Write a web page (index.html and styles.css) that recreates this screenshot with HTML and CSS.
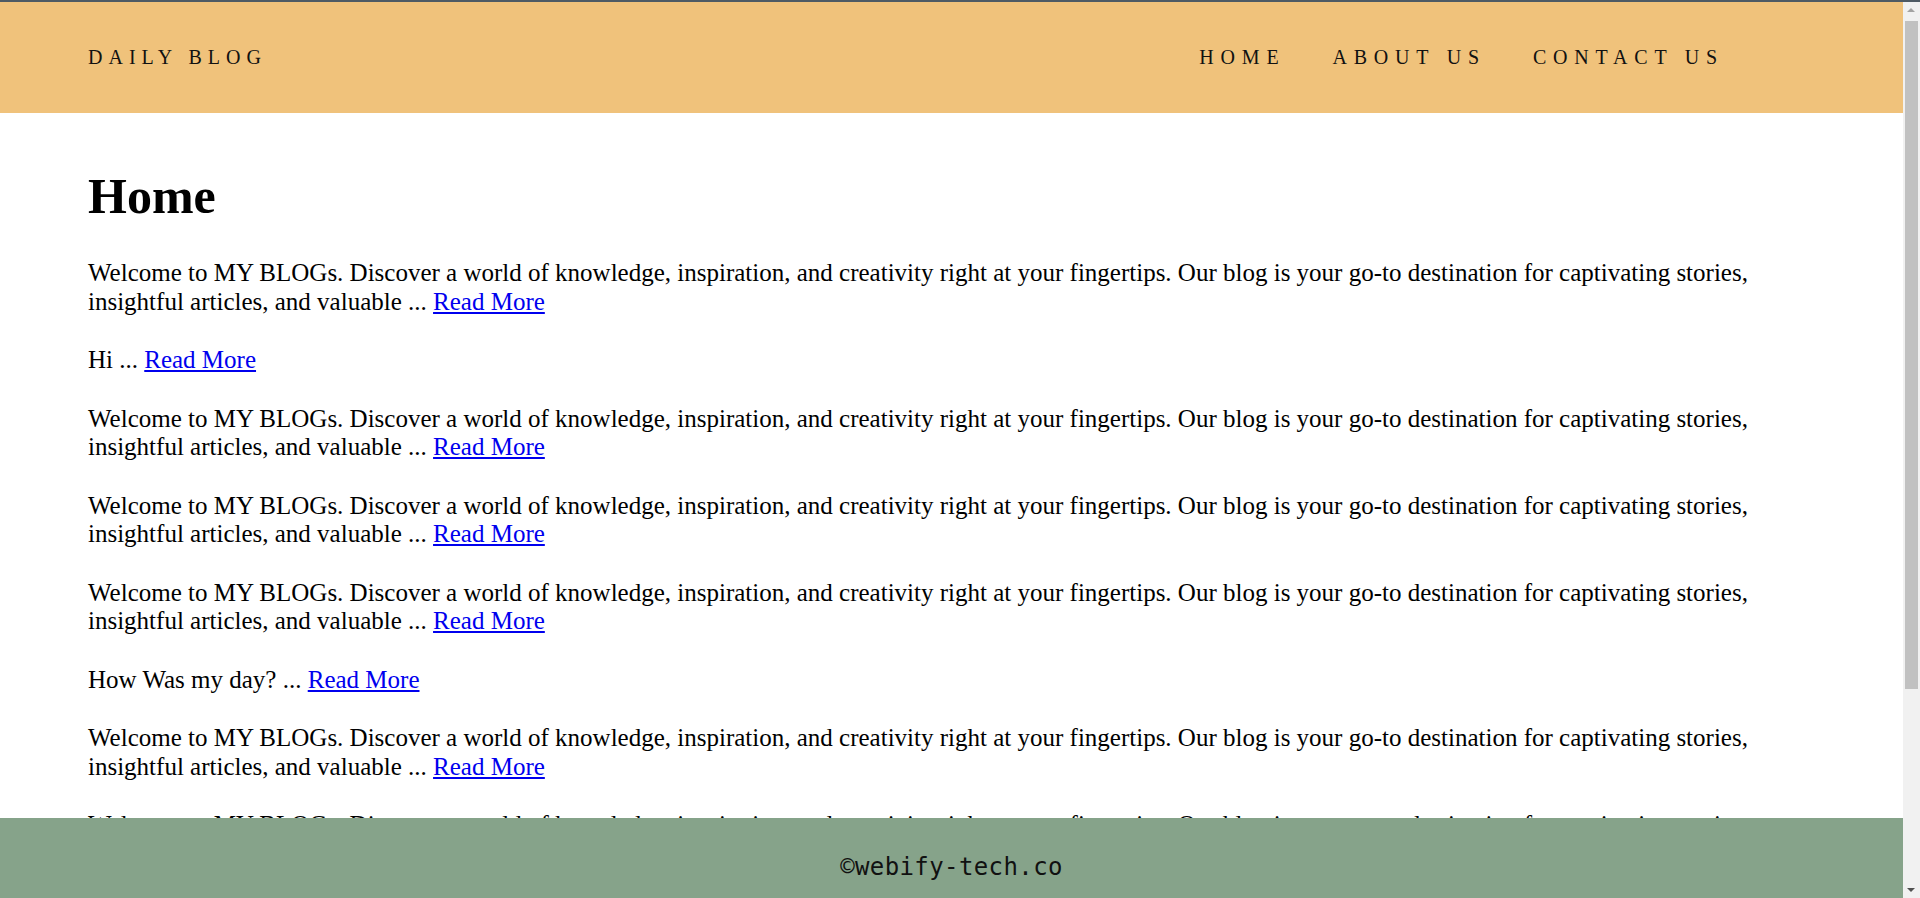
FILE: index.html
```html
<!DOCTYPE html>
<html lang="en">
<head>
<meta charset="utf-8">
<title>Daily Blog</title>
<link rel="stylesheet" href="styles.css">
</head>
<body>
<header class="site-header">
  <div class="logo">DAILY BLOG</div>
  <nav class="nav">
    <a class="nav-link" href="#">HOME</a>
    <a class="nav-link" href="#">ABOUT US</a>
    <a class="nav-link" href="#">CONTACT US</a>
  </nav>
</header>
<main class="content">
  <h1 class="page-title">Home</h1>
  <p class="post">Welcome to MY BLOGs. Discover a world of knowledge, inspiration, and creativity right at your fingertips. Our blog is your go-to destination for captivating stories, insightful articles, and valuable ... <a href="#">Read More</a></p>
  <p class="post">Hi ... <a href="#">Read More</a></p>
  <p class="post">Welcome to MY BLOGs. Discover a world of knowledge, inspiration, and creativity right at your fingertips. Our blog is your go-to destination for captivating stories, insightful articles, and valuable ... <a href="#">Read More</a></p>
  <p class="post">Welcome to MY BLOGs. Discover a world of knowledge, inspiration, and creativity right at your fingertips. Our blog is your go-to destination for captivating stories, insightful articles, and valuable ... <a href="#">Read More</a></p>
  <p class="post">Welcome to MY BLOGs. Discover a world of knowledge, inspiration, and creativity right at your fingertips. Our blog is your go-to destination for captivating stories, insightful articles, and valuable ... <a href="#">Read More</a></p>
  <p class="post">How Was my day? ... <a href="#">Read More</a></p>
  <p class="post">Welcome to MY BLOGs. Discover a world of knowledge, inspiration, and creativity right at your fingertips. Our blog is your go-to destination for captivating stories, insightful articles, and valuable ... <a href="#">Read More</a></p>
  <p class="post">Welcome to MY BLOGs. Discover a world of knowledge, inspiration, and creativity right at your fingertips. Our blog is your go-to destination for captivating stories, insightful articles, and valuable ... <a href="#">Read More</a></p>
  <p class="post">Welcome to MY BLOGs. Discover a world of knowledge, inspiration, and creativity right at your fingertips. Our blog is your go-to destination for captivating stories, insightful articles, and valuable ... <a href="#">Read More</a></p>
  <p class="post">Hi ... <a href="#">Read More</a></p>
</main>
<footer class="site-footer">
  <p class="copy">©webify-tech.co</p>
</footer>
<div class="scrollbar" aria-hidden="true">
  <span class="sb-arrow sb-up"></span>
  <span class="sb-thumb"></span>
  <span class="sb-arrow sb-down"></span>
</div>
</body>
</html>
```

FILE: styles.css
```css
html {
  background: #ffffff;
}

body {
  margin: 0;
  padding-right: 17px;
  border-top: 2px solid #4e5a64;
  font-family: "Liberation Serif", "Times New Roman", serif;
  font-size: 25px;
  color: #000;
}

.site-header {
  height: 111px;
  background: #f0c27b;
  display: flex;
  align-items: center;
  justify-content: space-between;
  padding: 0 179px 0 88px;
  box-sizing: border-box;
}

.logo {
  font-family: "Liberation Serif", "Times New Roman", serif;
  font-size: 20px;
  letter-spacing: 6px;
  color: #111;
}

.nav {
  display: flex;
  gap: 47px;
}

.nav-link {
  font-family: "Liberation Serif", "Times New Roman", serif;
  font-size: 20px;
  letter-spacing: 6.8px;
  color: #111;
  text-decoration: none;
}

.content {
  padding: 24px 88px 120px;
}

.page-title {
  font-size: 50px;
  margin: 30px 0 34px;
}

.post {
  line-height: 28.5px;
  margin: 30px 0;
}

.post a {
  color: #0000ee;
}

.site-footer {
  position: fixed;
  left: 0;
  right: 17px;
  bottom: 0;
  height: 80px;
  background: #86a38a;
  display: flex;
  justify-content: center;
}

.copy {
  margin: 0;
  padding-top: 35px;
  font-family: "DejaVu Sans Mono", "Liberation Mono", monospace;
  font-size: 24px;
  letter-spacing: 0.4px;
  color: #111;
}

.scrollbar {
  position: fixed;
  top: 2px;
  right: 0;
  bottom: 0;
  width: 17px;
  background: #f1f1f1;
}

.sb-thumb {
  position: absolute;
  left: 2px;
  right: 2px;
  top: 19px;
  height: 668px;
  background: #c1c1c1;
}

.sb-arrow {
  position: absolute;
  left: 4px;
  width: 0;
  height: 0;
  border-left: 4.5px solid transparent;
  border-right: 4.5px solid transparent;
}

.sb-up {
  top: 6px;
  border-bottom: 4.5px solid #a3a3a3;
}

.sb-down {
  bottom: 6px;
  border-top: 4.5px solid #505050;
}
```
